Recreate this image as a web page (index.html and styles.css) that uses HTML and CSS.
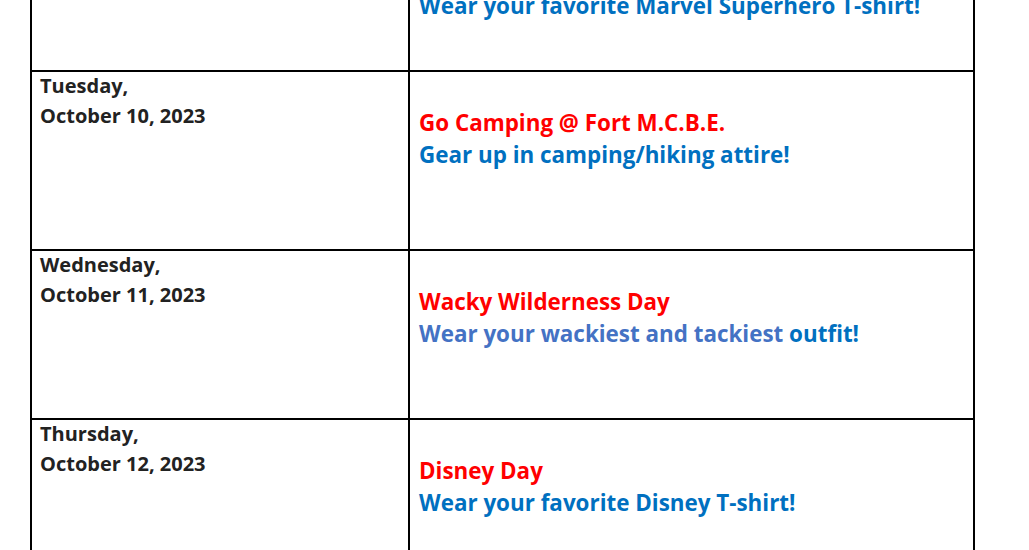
FILE: index.html
```html
<!DOCTYPE html>
<html>
<head>
<meta charset="utf-8">
<link rel="stylesheet" href="styles.css">
</head>
<body>
<table class="schedule">
  <colgroup><col class="col-date"><col class="col-event"></colgroup>
  <tr class="row row-mon">
    <td class="date"><div class="date-text">Monday,<br>October 9, 2023</div></td>
    <td class="event"><div class="title">Marvel Superhero Day</div><div class="wear">Wear your favorite Marvel Superhero T-shirt!</div></td>
  </tr>
  <tr class="row row-tue">
    <td class="date"><div class="date-text">Tuesday,<br>October 10, 2023</div></td>
    <td class="event"><div class="title">Go Camping @ Fort M.C.B.E.</div><div class="wear">Gear up in camping/hiking attire!</div></td>
  </tr>
  <tr class="row row-wed">
    <td class="date"><div class="date-text">Wednesday,<br>October 11, 2023</div></td>
    <td class="event"><div class="title">Wacky Wilderness Day</div><div class="wear"><span class="light">Wear your wackiest and tackiest </span>outfit!</div></td>
  </tr>
  <tr class="row row-thu">
    <td class="date"><div class="date-text">Thursday,<br>October 12, 2023</div></td>
    <td class="event"><div class="title">Disney Day</div><div class="wear">Wear your favorite Disney T-shirt!</div></td>
  </tr>
</table>
</body>
</html>
```
FILE: styles.css
```css
html, body {
  margin: 0;
  padding: 0;
  background: #fff;
}
body {
  font-family: "Open Sans", "Liberation Sans", sans-serif;
  font-weight: 700;
  overflow: hidden;
}
.schedule {
  border-collapse: collapse;
  table-layout: fixed;
  margin-top: -79px;
  margin-left: 30px;
  width: 945px;
}
.col-date { width: 378px; }
.schedule td {
  border: 2px solid #000;
  vertical-align: top;
}
.schedule .date {
  padding: 0 8px;
  font-size: 20px;
  line-height: 29.5px;
  color: #222;
}
.date-text { margin-top: -1px; }
.schedule .event {
  padding: 35px 9px 0;
  font-size: 22.4px;
  line-height: 32px;
}
.title { color: #ff0000; }
.wear { color: #0070c0; }
.light { color: #4472c4; }
.row-mon { height: 149px; }
.row-tue { height: 179px; }
.row-wed { height: 169px; }
.row-thu { height: 169px; }
```
